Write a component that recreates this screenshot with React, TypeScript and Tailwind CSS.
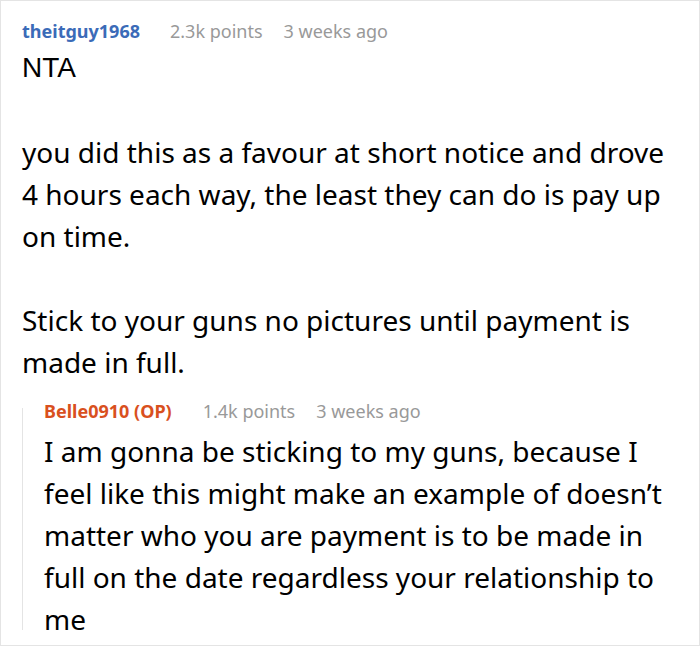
export default function App() {
  return (
    <div className="w-[700px] h-[646px] bg-white border border-[#e4e4e4] overflow-hidden font-['Noto_Sans',sans-serif] text-black">
      <div className="pl-[21px] pr-4 pt-[15px]">
        <div className="flex items-center h-[31px] text-[18px] leading-[31px]">
          <span className="font-bold text-[#3b6bb8]">theitguy1968</span>
          <span className="ml-[30px] text-[#999999]">2.3k points</span>
          <span className="ml-[21px] text-[#999999]">3 weeks ago</span>
        </div>
        <div className="text-[28px] leading-[42px]">
          <p className="font-['Liberation_Sans',sans-serif]">NTA</p>
          <p className="mt-[42px]">
            you did this as a favour at short notice and drove 4 hours each way, the least they can do is pay up on time.
          </p>
          <p className="mt-[42px]">Stick to your guns no pictures until payment is made in full.</p>
        </div>
        <div className="flex mt-[14px]">
          <div className="w-px bg-[#e4e4e4] mt-[11px] mb-[10px]" />
          <div className="pl-[21px] flex-1">
            <div className="flex items-start h-[33px] text-[18px] leading-[28px]">
              <span className="font-bold text-[#d9501e]">Belle0910 (OP)</span>
              <span className="ml-[31px] text-[#999999]">1.4k points</span>
              <span className="ml-[21px] text-[#999999]">3 weeks ago</span>
            </div>
            <p className="text-[28px] leading-[42px]">
              I am gonna be sticking to my guns, because I feel like this might make an example of doesn’t matter who you are payment is to be made in full on the date regardless your relationship to me
            </p>
          </div>
        </div>
      </div>
    </div>
  );
}
